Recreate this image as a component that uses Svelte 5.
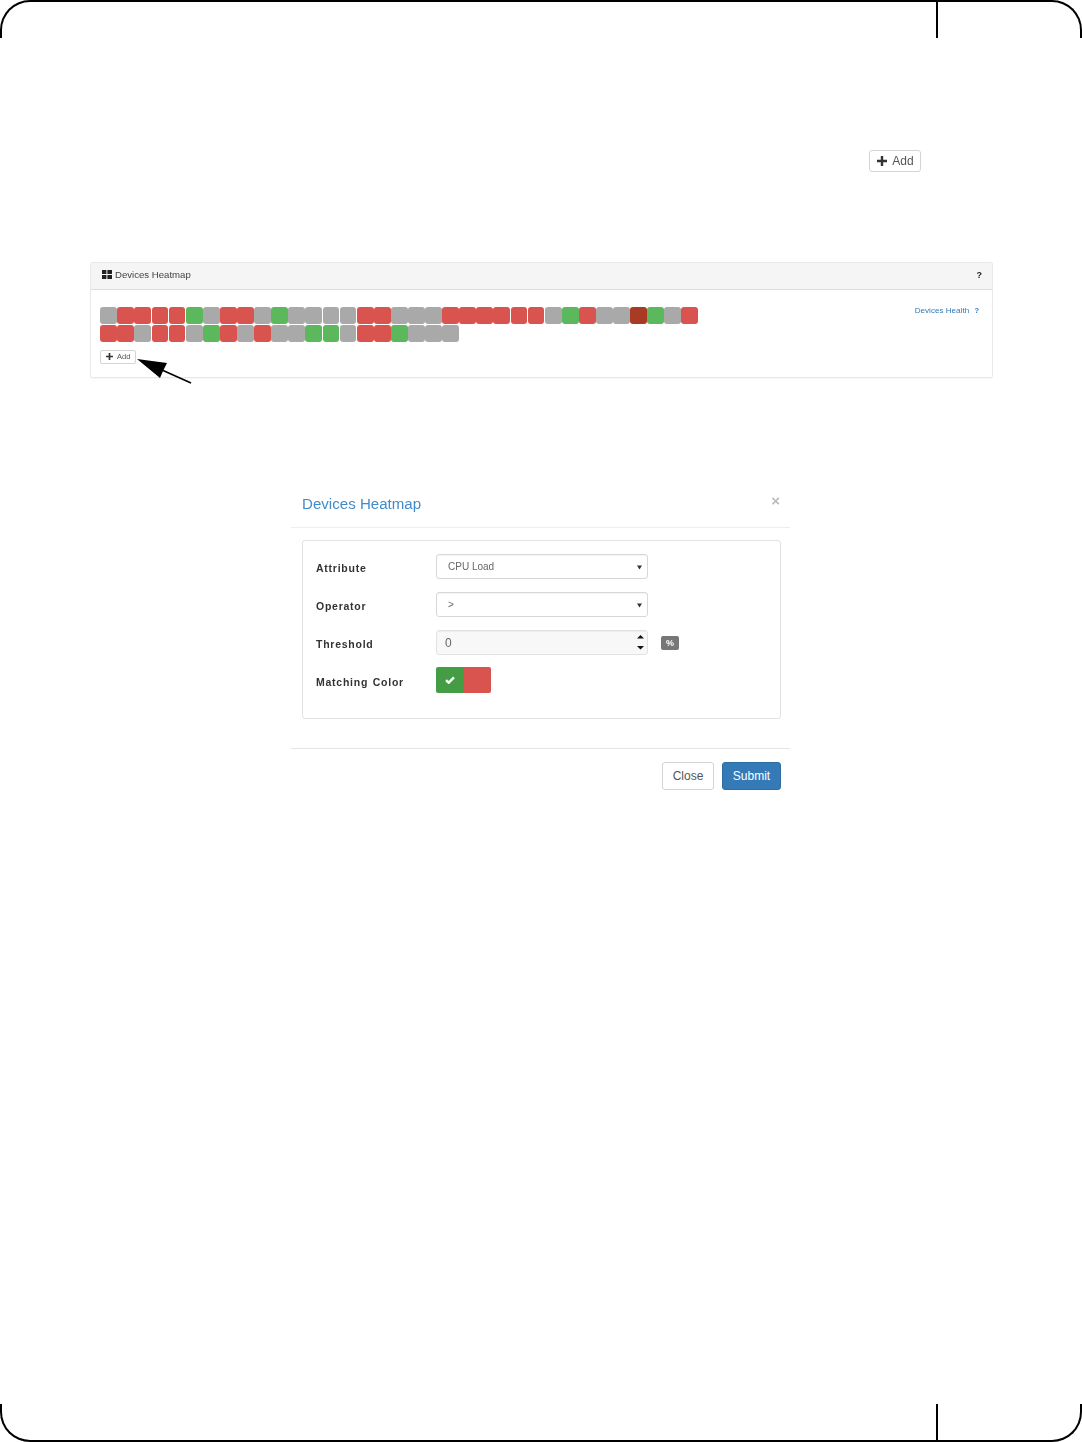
<script>
  const G = 'gray', R = 'red', N = 'green', D = 'dark';
  const expand = (runs) => runs.flatMap(([c, n]) => Array(n).fill(c));
  const cells = [
    ...expand([[G,1],[R,4],[N,1],[G,1],[R,2],[G,1],[N,1],[G,4],[R,2],[G,3],[R,6],[G,1],[N,1],[R,1],[G,2],[D,1],[N,1],[G,1],[R,1]]),
    ...expand([[R,2],[G,1],[R,2],[G,1],[N,1],[R,1],[G,1],[R,1],[G,2],[N,2],[G,1],[R,2],[N,1],[G,3]])
  ];
  const fields = [
    { label: 'Attribute', value: 'CPU Load' },
    { label: 'Operator', value: '>' }
  ];
</script>

<div class="page">
  <div class="frame top"><i class="tick"></i></div>

  <main class="content">
    <div class="add-row">
      <button class="btn add">
        <svg viewBox="0 0 10 10" class="plus"><path d="M3.8 0h2.4v3.8H10v2.4H6.2V10H3.8V6.2H0V3.8h3.8z"/></svg>
        Add
      </button>
    </div>

    <section class="panel">
      <header class="panel-head">
        <span class="title">
          <svg viewBox="0 0 10 9" class="grid-ico"><path d="M0 0h4.4v4H0zM5.4 0H10v4H5.4zM0 5h4.4v4H0zM5.4 5H10v4H5.4z"/></svg>
          Devices Heatmap
        </span>
        <b class="help">?</b>
      </header>
      <div class="panel-body">
        <div class="left">
          <div class="cells">
            {#each cells as c}<span class="cell {c}"></span>{/each}
          </div>
          <button class="btn add small">
            <svg viewBox="0 0 10 10" class="plus"><path d="M3.8 0h2.4v3.8H10v2.4H6.2V10H3.8V6.2H0V3.8h3.8z"/></svg>
            Add
          </button>
        </div>
        <a class="health" href="#health">Devices Health <b>?</b></a>
      </div>
      <svg class="arrow" viewBox="0 0 60 28" width="60" height="28">
        <path d="M55 25 L26 12" stroke="#000" stroke-width="1.6" fill="none"/>
        <path d="M1 1 L31 5 L27 13 L24 20 Z" fill="#000"/>
      </svg>
    </section>

    <section class="modal">
      <header class="modal-head">
        <h4>Devices Heatmap</h4>
        <span class="close">×</span>
      </header>
      <div class="modal-body">
        <div class="form">
          {#each fields as f}
            <div class="row">
              <label>{f.label}</label>
              <div class="control select">
                <span>{f.value}</span>
                <svg viewBox="0 0 6 5" class="caret"><path d="M0 0h6L3 5z"/></svg>
              </div>
            </div>
          {/each}
          <div class="row">
            <label>Threshold</label>
            <div class="control number">
              <span>0</span>
              <svg viewBox="0 0 7 15" class="spin"><path d="M3.5 0L7 3.5H0zM0 11h7l-3.5 3.5z"/></svg>
            </div>
            <span class="badge">%</span>
          </div>
          <div class="row color-row">
            <label>Matching Color</label>
            <div class="toggle">
              <span class="on">
                <svg viewBox="0 0 10 8" class="check"><path d="M1 4.2l2.7 2.5L9 1.4" fill="none" stroke="#fff" stroke-width="2.4"/></svg>
              </span>
              <span class="off"></span>
            </div>
          </div>
        </div>
      </div>
      <footer class="modal-foot">
        <button class="btn close-btn">Close</button>
        <button class="btn submit">Submit</button>
      </footer>
    </section>
  </main>

  <div class="frame bottom"><i class="tick"></i></div>
</div>

<style>
  :global(body) { margin: 0; background: #fff; }
  .page {
    width: 1082px;
    height: 1442px;
    position: relative;
    overflow: hidden;
    display: flex;
    flex-direction: column;
    justify-content: space-between;
    font-family: "Liberation Sans", Arial, sans-serif;
    color: #333;
    background: #fff;
  }
  .frame {
    height: 38px;
    box-sizing: border-box;
    border: 2px solid #000;
    position: relative;
    flex: none;
  }
  .frame.top { border-bottom: 0; border-radius: 30px 30px 0 0; }
  .frame.bottom { border-top: 0; border-radius: 0 0 30px 30px; }
  .tick { position: absolute; left: 934px; top: 0; bottom: 0; width: 2px; background: #000; }

  .content { flex: 1; display: flex; flex-direction: column; align-items: flex-start; filter: blur(.3px); }
  .add-row { margin-top: 112px; width: 921px; display: flex; justify-content: flex-end; }

  .btn {
    font-family: inherit;
    box-sizing: border-box;
    background: #fff;
    border: 1px solid #d4d4d4;
    border-radius: 3px;
    padding: 0;
    color: #555;
  }
  .add {
    width: 52px; height: 22px;
    font-size: 12px;
    display: flex; align-items: center; justify-content: center; gap: 5px;
    padding-left: 1px;
  }
  .plus { width: 10px; height: 10px; fill: #333; }
  .add.small { width: 36px; height: 14px; font-size: 7.5px; gap: 4px; margin-top: 8px; border-radius: 2px; padding-left: 0; }
  .add.small .plus { width: 7px; height: 7px; }

  .panel {
    margin: 90px 0 0 90px;
    width: 903px;
    height: 116px;
    box-sizing: border-box;
    border: 1px solid #e9e9e9;
    border-radius: 2px;
    position: relative;
    box-shadow: 0 1px 1px rgba(0,0,0,.04);
  }
  .panel-head {
    height: 23px;
    padding: 0 10px 3px 11px;
    background: #f5f5f5;
    border-bottom: 1px solid #ddd;
    display: flex; align-items: center; justify-content: space-between;
    font-size: 9.6px;
    color: #444;
  }
  .title { display: flex; align-items: center; gap: 3px; }
  .grid-ico { width: 10px; height: 9px; fill: #222; }
  .help { color: #222; font-size: 9px; }
  .panel-body {
    padding: 17.3px 13px 0 9.3px;
    display: flex; justify-content: space-between; align-items: flex-start;
  }
  .cells {
    display: grid;
    grid-template-columns: repeat(35, 16.8px);
    grid-auto-rows: 17px;
    column-gap: .3px;
    row-gap: .4px;
  }
  .cell { border-radius: 3px; }
  .gray { background: #a9a9a9; }
  .red { background: #d9534f; }
  .green { background: #5cb85c; }
  .dark { background: #a93a24; }
  .health { color: #337ab7; font-size: 8.1px; text-decoration: none; margin-top: -1px; }
  .health b { margin-left: 3px; font-size: 7.5px; }
  .arrow { position: absolute; left: 45px; top: 95px; }

  .modal { margin: 117px 0 0 291px; width: 499px; }
  .modal-head {
    height: 33px;
    position: relative;
    margin-top: -1px;
    border-bottom: 1px solid #eee;
  }
  h4 { margin: 0 0 0 11px; font-size: 15.1px; font-weight: 400; color: #428bca; line-height: 18px; position: relative; top: 1px; }
  .close { position: absolute; right: 10px; top: -2px; font-size: 15px; font-weight: 700; color: #bbb; line-height: 18px; }
  .modal-body { padding: 12px 9px 0 11px; }
  .form {
    height: 179px;
    box-sizing: border-box;
    border: 1px solid #e2e2e2;
    border-radius: 3px;
    padding: 13px;
    display: flex; flex-direction: column; gap: 13px;
  }
  .row { display: flex; align-items: center; height: 25px; }
  label { width: 120px; font-size: 10.5px; font-weight: 700; letter-spacing: .75px; word-spacing: 1px; color: #333; margin-top: 3px; }
  .control {
    width: 212px; height: 25px;
    box-sizing: border-box;
    border: 1px solid #d8d8d8;
    border-radius: 3px;
    display: flex; align-items: center; justify-content: space-between;
    color: #666;
    font-size: 10px;
    padding: 0 5px 0 11px;
    box-shadow: inset 0 1px 1px rgba(0,0,0,.05);
  }
  .caret { width: 5px; height: 5px; fill: #333; position: relative; top: 1px; }
  .number { background: #f8f8f8; font-size: 12px; padding: 0 3px 0 8px; border-color: #e2e2e2; }
  .spin { width: 7px; height: 15px; fill: #111; }
  .badge {
    margin-left: 13px; width: 18px; height: 14px;
    background: #777; color: #fff; border-radius: 2px;
    font-size: 9px; font-weight: 700;
    display: flex; align-items: center; justify-content: center;
  }
  .color-row { margin-top: -1px; }
  .color-row label { margin-top: 4px; }
  .toggle { display: flex; width: 55px; height: 26px; border-radius: 2px; overflow: hidden; }
  .on { width: 28px; background: #449d44; display: flex; align-items: center; justify-content: center; }
  .off { flex: 1; background: #d9534f; }
  .check { width: 10px; height: 8px; }
  .modal-foot {
    margin-top: 29px;
    border-top: 1px solid #e5e5e5;
    padding: 13px 9px 0 0;
    display: flex; justify-content: flex-end; gap: 8px;
  }
  .close-btn, .submit { height: 28px; font-size: 12px; }
  .close-btn { width: 52px; color: #555; }
  .submit { width: 59px; background: #337ab7; border-color: #2e6da4; color: #fff; }
</style>
